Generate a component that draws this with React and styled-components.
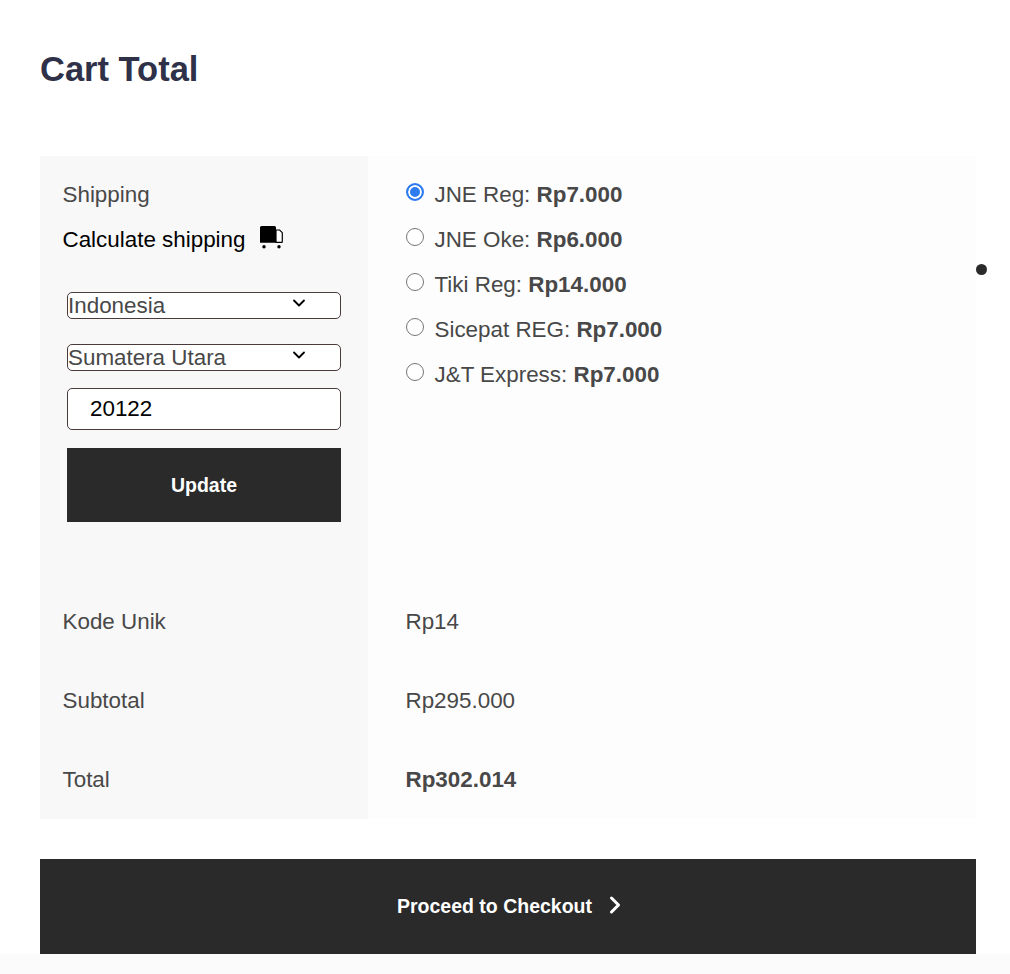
import React from "react";
import styled, { createGlobalStyle } from "styled-components";
import { ChevronDown, ChevronRight } from "lucide-react";

const GlobalStyle = createGlobalStyle`
  * {
    box-sizing: border-box;
  }
  html,
  body {
    margin: 0;
    padding: 0;
    background: #fff;
  }
  body {
    font-family: "Liberation Sans", Arial, sans-serif;
    overflow: hidden;
  }
`;

const shippingOptions = [
  { name: "JNE Reg", price: "Rp7.000", checked: true },
  { name: "JNE Oke", price: "Rp6.000" },
  { name: "Tiki Reg", price: "Rp14.000" },
  { name: "Sicepat REG", price: "Rp7.000" },
  { name: "J&T Express", price: "Rp7.000" },
];

const TruckIcon = () => (
  <TruckSvg width="23" height="23" viewBox="0 0 23 23" aria-hidden="true">
    <path d="M0 1.5A1.5 1.5 0 0 1 1.5 0h13A1.5 1.5 0 0 1 16 1.5V16.7H0z" fill="#000" />
    <path
      d="M16 4h3.6l2.7 2.7v9a.6.6 0 0 1-.6.6H16z"
      fill="#fff"
      stroke="#000"
      strokeWidth="1.2"
    />
    <circle cx="4" cy="20.7" r="1.7" fill="#000" />
    <circle cx="19" cy="20.7" r="1.7" fill="#000" />
  </TruckSvg>
);

const App = () => {
  return (
    <Page>
      <GlobalStyle />
      <Title>Cart Total</Title>
      <Table>
        <LabelCell>
          <Label>Shipping</Label>
          <CalcRow>
            Calculate shipping
            <TruckIcon />
          </CalcRow>
          <Form>
            <SelectBox>
              <SelectField defaultValue="Indonesia">
                <option>Indonesia</option>
              </SelectField>
              <SelectArrow />
            </SelectBox>
            <SelectBox>
              <SelectField defaultValue="Sumatera Utara">
                <option>Sumatera Utara</option>
              </SelectField>
              <SelectArrow />
            </SelectBox>
            <PostcodeInput defaultValue="20122" />
            <UpdateButton type="button">Update</UpdateButton>
          </Form>
        </LabelCell>
        <ValueCell>
          <RadioList>
            {shippingOptions.map((option) => (
              <RadioRow key={option.name}>
                <RadioInput
                  type="radio"
                  name="shipping"
                  defaultChecked={option.checked}
                />
                <span>
                  {option.name}: <strong>{option.price}</strong>
                </span>
              </RadioRow>
            ))}
          </RadioList>
          <Dot />
        </ValueCell>

        <LabelCell $summary>
          <Label>Kode Unik</Label>
        </LabelCell>
        <ValueCell $summary>Rp14</ValueCell>

        <LabelCell $summary>
          <Label>Subtotal</Label>
        </LabelCell>
        <ValueCell $summary>Rp295.000</ValueCell>

        <LabelCell $summary>
          <Label>Total</Label>
        </LabelCell>
        <ValueCell $summary>
          <strong>Rp302.014</strong>
        </ValueCell>
      </Table>
      <CheckoutButton type="button">
        Proceed to Checkout
        <CheckoutArrow />
      </CheckoutButton>
      <BottomStrip />
    </Page>
  );
};

const Page = styled.div`
  width: 1010px;
  height: 974px;
  padding: 0 34px 0 40px;
  overflow: hidden;
`;

const Title = styled.h1`
  margin: 0;
  padding-top: 48px;
  height: 156px;
  font-size: 34.5px;
  line-height: 42px;
  font-weight: 700;
  color: #2f3148;
`;

const Table = styled.div`
  display: grid;
  grid-template-columns: 328px 608px;
  grid-template-rows: 426px 79px 79px 79px;
  height: 663px;
`;

const LabelCell = styled.div`
  background: #f8f8f8;
  padding: ${(p) => (p.$summary ? "27px 27px 0 22.5px" : "26px 27px 0 22.5px")};
`;

const ValueCell = styled.div`
  position: relative;
  background: #fdfdfd;
  padding: ${(p) => (p.$summary ? "27px" : "26px")} 0 0 37.5px;
  font-size: 22.4px;
  line-height: 25px;
  color: #484848;
`;

const Label = styled.div`
  font-size: 22.4px;
  line-height: 25px;
  color: #484848;
`;

const CalcRow = styled.div`
  display: flex;
  align-items: center;
  gap: 15px;
  margin-top: 20px;
  font-size: 22.4px;
  line-height: 25px;
  color: #000;
`;

const TruckSvg = styled.svg`
  flex: none;
  margin-top: -3px;
  margin-bottom: 1px;
`;

const Form = styled.div`
  display: flex;
  flex-direction: column;
  margin: 40px 0 0 4.5px;
`;

const SelectBox = styled.div`
  position: relative;
  height: 27px;
  margin-bottom: 25px;
  &:nth-child(2) {
    margin-bottom: 17px;
  }
`;

const SelectField = styled.select`
  appearance: none;
  display: block;
  width: 100%;
  height: 100%;
  padding: 0;
  border: 1px solid #4a3a3a;
  border-radius: 5px;
  background: #fff;
  font-family: inherit;
  font-size: 22.4px;
  line-height: 25px;
  color: #484848;
`;

const SelectArrow = styled(ChevronDown).attrs({ size: 20, strokeWidth: 2.2 })`
  position: absolute;
  top: 1px;
  right: 32px;
  color: #000;
  pointer-events: none;
`;

const PostcodeInput = styled.input`
  height: 42px;
  padding: 0 22px;
  border: 1px solid #4a3a3a;
  border-radius: 5px;
  background: #fff;
  font-family: inherit;
  font-size: 22.4px;
  color: #000;
`;

const UpdateButton = styled.button`
  height: 74px;
  margin-top: 18px;
  border: 0;
  background: #2a2a2a;
  color: #fff;
  font-family: inherit;
  font-size: 19.5px;
  font-weight: 700;
`;

const RadioList = styled.div`
  display: flex;
  flex-direction: column;
  gap: 20px;
`;

const RadioRow = styled.label`
  display: flex;
  align-items: center;
  gap: 10.5px;
  height: 25px;
`;

const RadioInput = styled.input`
  appearance: none;
  flex: none;
  width: 18px;
  height: 18px;
  margin: -6px 0 0 0.5px;
  border: 1.5px solid #767676;
  border-radius: 50%;
  background: #fff;
  &:checked {
    border: 2px solid #2f7bf0;
    box-shadow: inset 0 0 0 2px #fff;
    background: #2f7bf0;
  }
`;

const Dot = styled.span`
  position: absolute;
  top: 108px;
  right: -11px;
  width: 11px;
  height: 11px;
  border-radius: 50%;
  background: #2a2a2a;
`;

const CheckoutButton = styled.button`
  display: flex;
  align-items: center;
  justify-content: center;
  gap: 8.5px;
  width: 100%;
  height: 95px;
  margin-top: 40px;
  border: 0;
  background: #2a2a2a;
  color: #fff;
  font-family: inherit;
  font-size: 19.5px;
  font-weight: 700;
`;

const CheckoutArrow = styled(ChevronRight).attrs({ size: 28, strokeWidth: 2.6 })`
  margin: -3px -9.5px 0 0;
`;

const BottomStrip = styled.div`
  height: 20px;
  margin: 0 -34px 0 -40px;
  background: #fbfbfb;
`;

export default App;
